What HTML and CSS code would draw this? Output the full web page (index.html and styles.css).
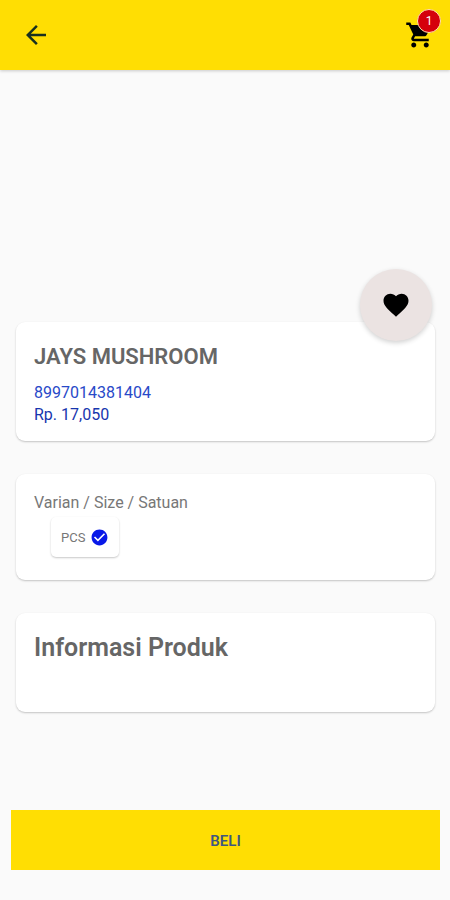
FILE: index.html
```html
<!DOCTYPE html>
<html lang="id">
<head>
<meta charset="utf-8">
<meta name="viewport" content="width=device-width, initial-scale=1">
<title>Jays Mushroom</title>
<link rel="stylesheet" href="styles.css">
</head>
<body>
<header class="app-bar">
  <button class="icon-button" type="button" aria-label="Kembali">
    <svg class="icon icon-back" viewBox="0 0 24 24" aria-hidden="true"><path d="M20 11H7.83l5.59-5.59L12 4l-8 8 8 8 1.41-1.41L7.83 13H20v-2z"/></svg>
  </button>
  <button class="icon-button" type="button" aria-label="Keranjang">
    <svg class="icon" viewBox="0 0 24 24" aria-hidden="true"><path d="M7 18c-1.1 0-1.99.9-1.99 2S5.900 22 7 22s2-.9 2-2-.9-2-2-2zM1 2v2h2l3.600 7.590-1.350 2.450c-.16.280-.25.610-.25.960 0 1.100.9 2 2 2h12v-2H7.420c-.14 0-.25-.11-.25-.25l.03-.12.900-1.630h7.450c.75 0 1.410-.41 1.750-1.030l3.580-6.490A1 1 0 0 0 20 4H5.210l-.94-2H1zm16 16c-1.100 0-1.990.9-1.990 2s.89 2 1.990 2 2-.9 2-2-.9-2-2-2z"/></svg>
    <span class="badge">1</span>
  </button>
</header>
<main class="content">
  <section class="card product">
    <button class="favorite" type="button" aria-label="Favorit">
      <svg class="icon" viewBox="0 0 24 24" aria-hidden="true"><path d="M12 21.350l-1.450-1.320C5.400 15.360 2 12.280 2 8.500 2 5.420 4.420 3 7.500 3c1.740 0 3.410.81 4.500 2.090C13.090 3.810 14.760 3 16.500 3 19.580 3 22 5.420 22 8.500c0 3.780-3.400 6.860-8.550 11.540L12 21.350z"/></svg>
    </button>
    <h1 class="product-name">JAYS MUSHROOM</h1>
    <p class="detail">8997014381404</p>
    <p class="detail price">Rp. 17,050</p>
  </section>
  <section class="card variants">
    <h2 class="label">Varian / Size / Satuan</h2>
    <button class="chip" type="button" aria-pressed="true">PCS
      <svg class="check" viewBox="0 0 24 24" aria-hidden="true"><path d="M12 2C6.480 2 2 6.480 2 12s4.480 10 10 10 10-4.480 10-10S17.520 2 12 2zm-2 15l-5-5 1.410-1.410L10 14.170l7.590-7.590L19 8l-9 9z"/></svg>
    </button>
  </section>
  <section class="card info">
    <h2 class="info-title">Informasi Produk</h2>
  </section>
</main>
<footer class="footer">
  <button class="buy" type="button">BELI</button>
</footer>
</body>
</html>
```
FILE: styles.css
```css
* { box-sizing: border-box; }

body {
  margin: 0;
  min-height: 100vh;
  display: flex;
  flex-direction: column;
  background: #fafafa;
  color: #666;
  font-family: Roboto, sans-serif;
}

h1, h2, p { margin: 0; }

button {
  border: 0;
  padding: 0;
  font-family: inherit;
  cursor: pointer;
}

.app-bar {
  display: flex;
  align-items: center;
  justify-content: space-between;
  padding: 20px 15px 20px 21px;
  background: #ffde03;
  box-shadow: 0 1px 3px rgba(0, 0, 0, 0.2);
}

.icon-button {
  position: relative;
  display: flex;
  background: none;
}

.icon {
  width: 30px;
  height: 30px;
  fill: #000;
}

.icon-back { fill: #18301f; }

.badge {
  position: absolute;
  top: -11px;
  right: -6px;
  width: 24px;
  height: 24px;
  border: 1px solid #ffe5b0;
  border-radius: 50%;
  background: #d5000c;
  color: #fff;
  font-size: 12px;
  line-height: 23px;
  text-align: center;
}

.content {
  flex: 1;
  display: flex;
  flex-direction: column;
  gap: 33px;
  padding: 252px 15px 32px 16px;
}

.card {
  position: relative;
  padding: 21px 18px;
  border-radius: 9px;
  background: #fff;
  box-shadow: 0 1px 2px rgba(0, 0, 0, 0.22);
}

.favorite {
  position: absolute;
  top: -53px;
  right: 3px;
  width: 72px;
  height: 72px;
  display: grid;
  place-items: center;
  border-radius: 50%;
  background: #ebe3e2;
  box-shadow: 0 2px 5px rgba(0, 0, 0, 0.18);
}

.product-name {
  margin-bottom: 11px;
  font-size: 22px;
  line-height: 28px;
  font-weight: 600;
}

.product { padding-bottom: 15px; }

.detail {
  color: #2849c8;
  font-size: 16px;
  line-height: 22px;
}

.price { color: #1736ae; }

.variants { padding: 19px 18px 23px; }

.label {
  color: #777;
  font-size: 16px;
  line-height: 20px;
  font-weight: 400;
}

.chip {
  display: flex;
  align-items: center;
  gap: 5px;
  height: 40px;
  margin: 4px 0 0 17px;
  padding: 0 10px;
  border-radius: 5px;
  background: #fff;
  color: #777;
  font-size: 13px;
  box-shadow: 0 1px 2px rgba(0, 0, 0, 0.22);
}

.check {
  width: 19px;
  height: 19px;
  fill: #0818e8;
}

.info { min-height: 99px; }

.info-title {
  font-size: 25px;
  line-height: 28px;
  font-weight: 600;
}

.footer { padding: 0 10px 30px 11px; }

.buy {
  width: 100%;
  height: 60px;
  padding-top: 2px;
  background: #ffde03;
  color: #3f5680;
  font-size: 15px;
  font-weight: 600;
}
```
